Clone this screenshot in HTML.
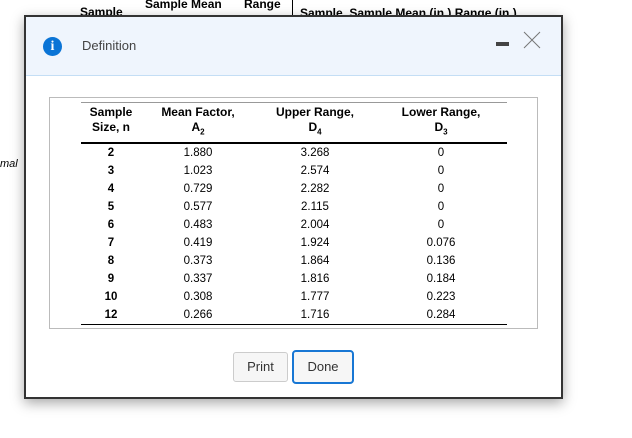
<!DOCTYPE html>
<html><head><style>
body{margin:0;width:632px;height:438px;background:#fff;position:relative;overflow:hidden;font-family:"Liberation Sans",Arial,sans-serif}
.bg{position:absolute;font-weight:bold;font-size:12px;color:#000;white-space:nowrap}
.dlg{position:absolute;left:24px;top:15px;width:535px;height:380px;border:2px solid #333;background:#fff;box-shadow:0 4px 12px rgba(0,0,0,.35)}
.hdr{position:absolute;left:0;top:0;right:0;height:58px;background:#eff5fd;border-bottom:1px solid #c4def5}
.inner{position:absolute;left:23px;top:80px;width:487px;height:230px;border:1px solid #bbb}
table{position:absolute;left:31px;top:4px;width:426px;border-collapse:collapse;font-size:11.5px;color:#000;table-layout:fixed}
td{text-align:center;height:18px;padding:0;line-height:18px}
th{font-weight:bold;font-size:12px;line-height:15px;padding:2px 0 3px;vertical-align:top}
td:first-child{font-weight:bold}
.btn{position:absolute;font-size:13px;color:#333;text-align:center;background:#f6f6f6;border-radius:3px}
</style></head><body>
<div class="bg" style="left:80px;top:5px">Sample</div>
<div class="bg" style="left:145px;top:-3px">Sample Mean</div>
<div class="bg" style="left:244px;top:-3px">Range</div>
<div style="position:absolute;left:292px;top:0;width:1px;height:16px;background:#000"></div>
<div class="bg" style="left:300px;top:6px">Sample&nbsp; Sample Mean (in.) Range (in.)</div>
<div style="position:absolute;left:0;top:158px;font-size:11px;font-style:italic">mal</div>
<div class="dlg">
<div class="hdr">
<div style="position:absolute;left:17px;top:20px;width:19px;height:19px;border-radius:50%;background:#0a74d6;color:#fff;font-weight:bold;font-size:14px;text-align:center;line-height:19px;font-family:'Liberation Serif',serif">i</div>
<div style="position:absolute;left:56px;top:21px;font-size:13px;color:#444">Definition</div>
<div style="position:absolute;left:470px;top:25px;width:13px;height:4px;background:#444"></div>
<svg style="position:absolute;left:497px;top:14px" width="18" height="18"><path d="M1 1L17 17M17 1L1 17" stroke="#777" stroke-width="1"/></svg>
</div>
<div class="inner">
<table>
<colgroup><col style="width:60px"><col style="width:114px"><col style="width:120px"><col style="width:132px"></colgroup>
<tr style="border-top:1px solid #999;border-bottom:2px solid #000"><th>Sample<br>Size, n</th><th>Mean Factor,<br>A<sub style="font-size:8px">2</sub></th><th>Upper Range,<br>D<sub style="font-size:8px">4</sub></th><th>Lower Range,<br>D<sub style="font-size:8px">3</sub></th></tr>
<tr><td>2</td><td>1.880</td><td>3.268</td><td>0</td></tr>
<tr><td>3</td><td>1.023</td><td>2.574</td><td>0</td></tr>
<tr><td>4</td><td>0.729</td><td>2.282</td><td>0</td></tr>
<tr><td>5</td><td>0.577</td><td>2.115</td><td>0</td></tr>
<tr><td>6</td><td>0.483</td><td>2.004</td><td>0</td></tr>
<tr><td>7</td><td>0.419</td><td>1.924</td><td>0.076</td></tr>
<tr><td>8</td><td>0.373</td><td>1.864</td><td>0.136</td></tr>
<tr><td>9</td><td>0.337</td><td>1.816</td><td>0.184</td></tr>
<tr><td>10</td><td>0.308</td><td>1.777</td><td>0.223</td></tr>
<tr style="border-bottom:1px solid #000"><td>12</td><td>0.266</td><td>1.716</td><td>0.284</td></tr>
</table>
</div>
<div class="btn" style="left:207px;top:335px;width:53px;height:28px;line-height:28px;border:1px solid #ccc">Print</div>
<div class="btn" style="left:266px;top:333px;width:58px;height:30px;line-height:30px;border:2px solid #1877d4;border-radius:4px">Done</div>
</div>
</body></html>
